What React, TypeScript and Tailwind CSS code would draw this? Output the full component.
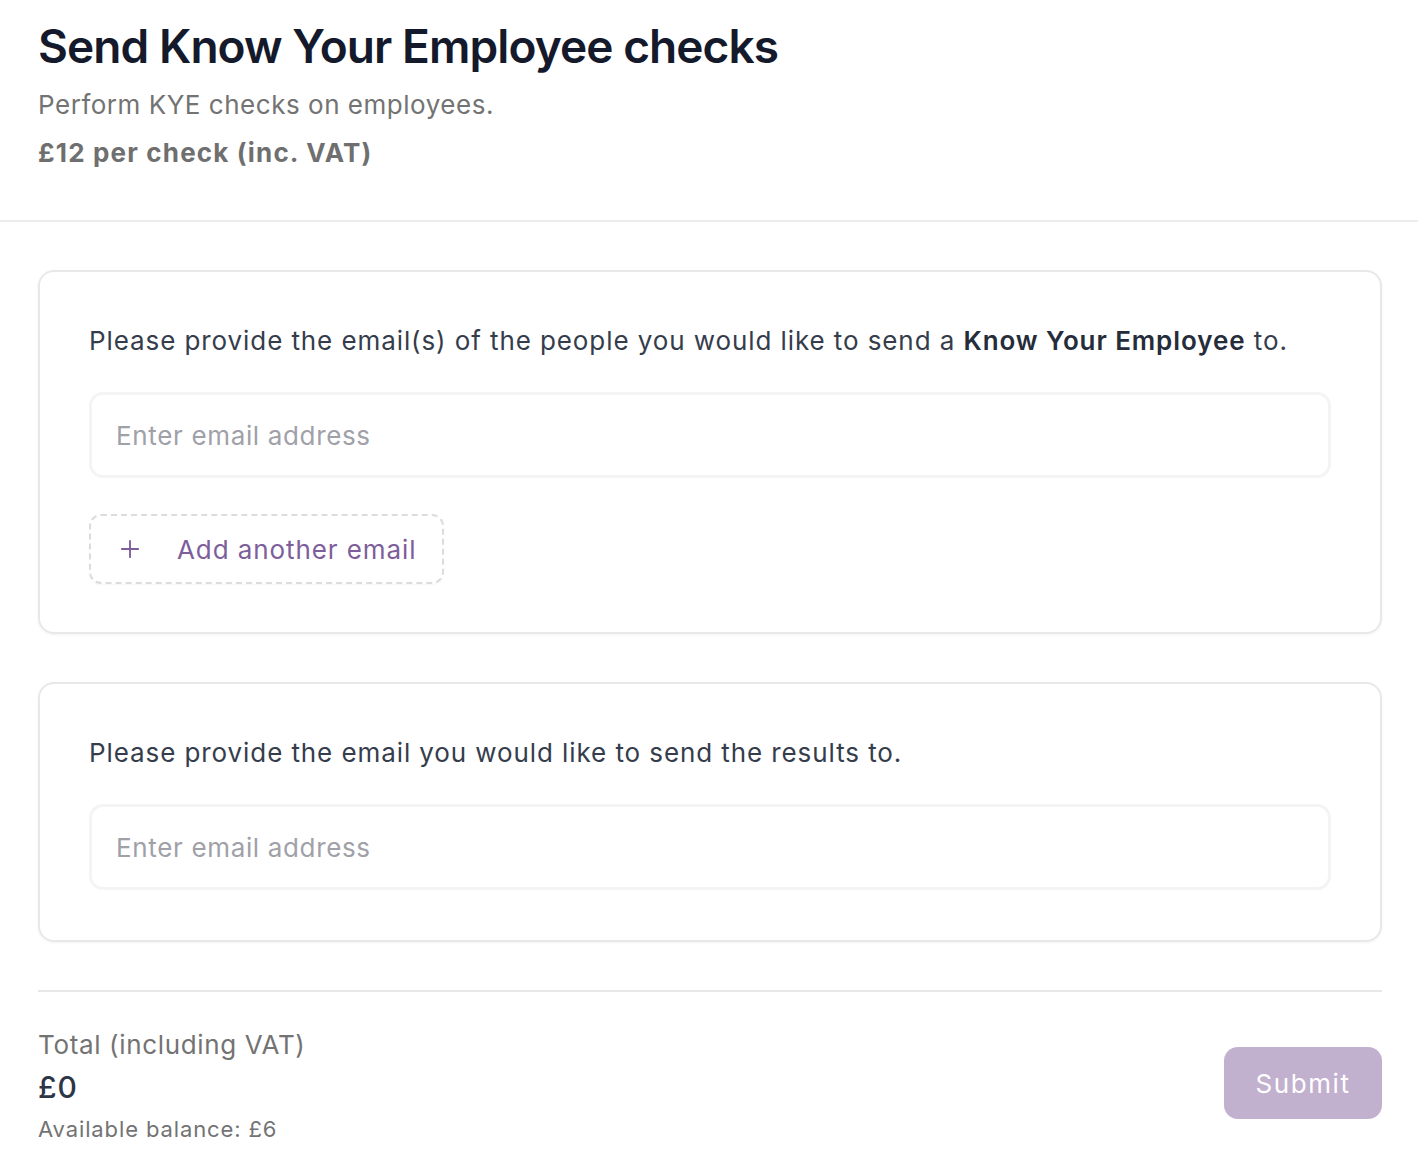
import { Plus } from 'lucide-react';

export default function App() {
  return (
    <div className="min-h-screen bg-white" style={{ fontFamily: 'Inter, "Noto Sans", sans-serif' }}>
      {/* Header */}
      <div className="px-[38px] pt-[18px] pb-[49px] border-b-2 border-[#ececec]">
        <h1 className="text-[46px] leading-[56px] font-semibold tracking-[-0.02em] text-[#141a2b]">
          Send Know Your Employee checks
        </h1>
        <p className="mt-[13px] text-[26px] leading-[36px] tracking-[0.02em] text-[#737373]">
          Perform KYE checks on employees.
        </p>
        <p className="mt-[12px] text-[26px] leading-[36px] font-bold tracking-[0.045em] text-[#6f6f6f]">
          £12 per check (inc. VAT)
        </p>
      </div>

      <div className="pl-[38px] pr-[36px] pt-[48px]">
        {/* Recipients */}
        <div className="rounded-[16px] border-2 border-[#e8e8e8] shadow-[0_1px_3px_rgba(0,0,0,0.05)] pl-[49px] pr-[49px] pt-[49px] pb-[48px]">
          <p className="text-[26px] leading-[40px] tracking-[0.035em] text-[#353d4c]">
            Please provide the email(s) of the people you would like to send a{' '}
            <span className="font-semibold text-[#252c3a]">Know Your Employee</span> to.
          </p>
          <input
            type="email"
            placeholder="Enter email address"
            className="mt-[31px] block w-full h-[86px] rounded-[14px] border-[3px] border-[#f4f4f4] px-[24px] text-[26px] tracking-[0.025em] text-[#353d4c] placeholder:text-[#a0a1a8] outline-none"
          />
          <button className="mt-[36px] flex items-center h-[70px] rounded-[12px] border-2 border-dashed border-[#dcdcdc] pl-[25px] pr-[26px] text-[26px] tracking-[0.035em] text-[#7d5e9b] shadow-[0_1px_2px_rgba(0,0,0,0.04)]">
            <Plus size={28} strokeWidth={1.6} className="text-[#7d5e9b]" />
            <span className="ml-[33px]">Add another email</span>
          </button>
        </div>

        {/* Results recipient */}
        <div className="mt-[48px] rounded-[16px] border-2 border-[#e8e8e8] shadow-[0_1px_3px_rgba(0,0,0,0.05)] pl-[49px] pr-[49px] pt-[49px] pb-[50px]">
          <p className="text-[26px] leading-[40px] tracking-[0.035em] text-[#353d4c]">
            Please provide the email you would like to send the results to.
          </p>
          <input
            type="email"
            placeholder="Enter email address"
            className="mt-[31px] block w-full h-[86px] rounded-[14px] border-[3px] border-[#f4f4f4] px-[24px] text-[26px] tracking-[0.025em] text-[#353d4c] placeholder:text-[#a0a1a8] outline-none"
          />
        </div>

        {/* Footer */}
        <div className="mt-[48px] border-t-2 border-[#e8e8e8] pt-[33px] flex items-start justify-between">
          <div>
            <p className="text-[26px] leading-[40px] tracking-[0.025em] text-[#737373]">Total (including VAT)</p>
            <p className="text-[30px] leading-[45px] font-medium tracking-[0.03em] text-[#2d3546]">£0</p>
            <p className="text-[22px] leading-[38px] tracking-[0.04em] text-[#737373]">Available balance: £6</p>
          </div>
          <button className="mt-[22px] h-[72px] w-[158px] rounded-[14px] bg-[#c2b0cf] text-[26px] tracking-[0.06em] text-white">
            Submit
          </button>
        </div>
      </div>
    </div>
  );
}
